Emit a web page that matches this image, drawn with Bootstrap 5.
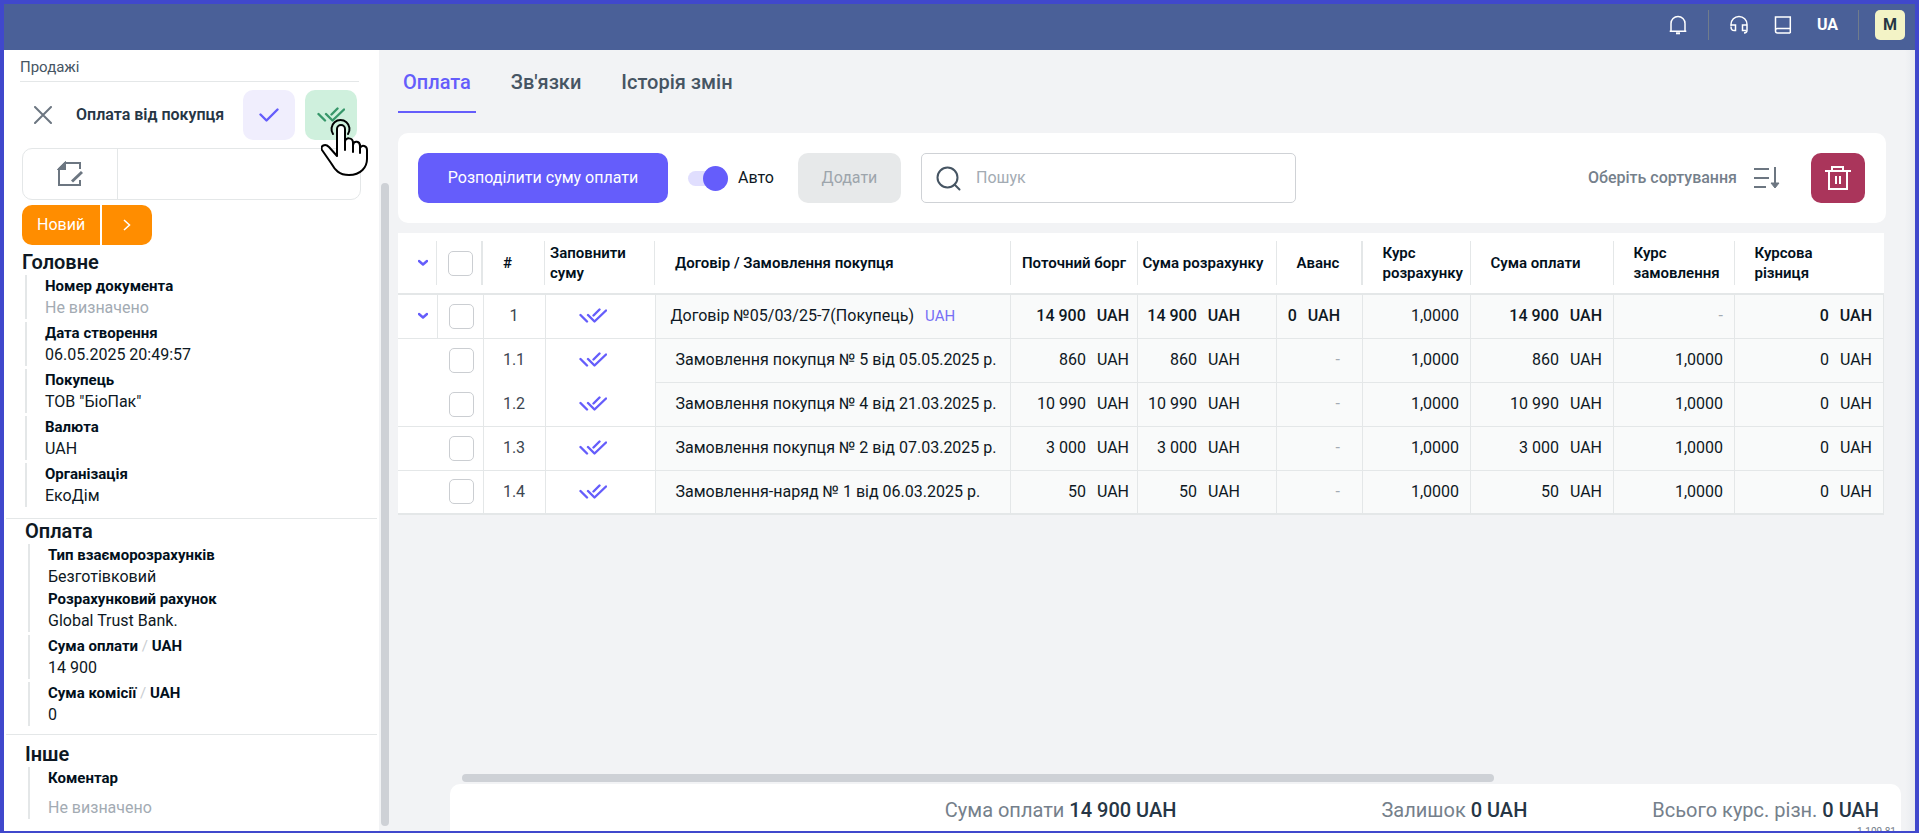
<!DOCTYPE html>
<html lang="uk">
<head>
<meta charset="utf-8">
<meta name="viewport" content="width=device-width, initial-scale=1">
<title>Оплата від покупця</title>
<link href="https://cdn.jsdelivr.net/npm/bootstrap@5.3.0/dist/css/bootstrap.min.css" rel="stylesheet">
<style>
  :root { --accent: #655dfb; --ink: #0e1823; --slate: #465563; --muted: #75808b; --line: #e4e7e8; }
  body { font-family: Roboto, "Liberation Sans", sans-serif; font-size: 16px; line-height: 22px; color: var(--ink); background: #f2f3f5; }
  .app { min-height: 100vh; border: 4px solid #4048cc; border-bottom-width: 2px; }
  .topbar { background: #4a6098; padding: 6px 10px 10px; color: #fff; }
  .topbar a { color: #fff; }
  .topbar .vr { color: #707c8c; opacity: 1; margin: 0 20px; }
  .topbar .vr:last-of-type { margin-right: 16px; }
  .avatar { width: 30px; height: 30px; border-radius: 5px; background: #f3f3c6; color: #263645; }
  svg { display: block; fill: none; }

  /* left panel */
  .side { width: 375px; background: #fff; }
  .crumb { font-size: 15px; color: var(--slate); border-bottom: 1px solid var(--line); margin: 0 20px 0 16px; padding: 11px 0 8px; line-height: 12px; }
  .docname { font-weight: 600; color: #263645; }
  .sq { width: 52px; height: 50px; border-radius: 10px; border: 0; padding: 0; display: grid; place-items: center; }
  .sq-ok { background: #f0eefd; }
  .sq-all { background: #cff0dd; color: #37976a; }
  .hand { position: absolute; left: 16px; top: 29px; pointer-events: none; }
  .strip { border: 1px solid var(--line); border-radius: 10px; height: 52px; margin: 8px 18px 5px; }
  .strip .cellbtn { width: 95px; border: 0; border-right: 1px solid var(--line); background: none; display: grid; place-items: center; }
  .state { margin-left: 18px; gap: 2px; }
  .state button { background: #ff8d00; color: #fff; border: 0; height: 40px; padding: 0 15px; }
  .state button:first-child { border-radius: 10px 0 0 10px; }
  .state button:last-child { border-radius: 0 10px 10px 0; width: 50px; }
  .sect { border-bottom: 1px solid var(--line); padding: 0 16px 5px 19px; margin: 0 2px; }
  .sect-first { padding: 5px 16px 8px; }
  .sect-last { padding-top: 7px; border: 0; }
  .sect h2 { font-size: 20px; line-height: 25px; font-weight: 600; margin: 0; }
  .sect dl { border-left: 2px solid var(--line); margin: 0 0 3px 3px; padding-left: 18px; }
  .sect dt { font-size: 15px; font-weight: 700; line-height: 22px; color: #02101c; }
  .sect dd { margin: 0; }
  .sect .sep { color: #c9cdd1; font-weight: 400; }
  .none { color: #a3abb3; }
  .vtrack { width: 10px; padding: 133px 0 5px 2px; }
  .thumb { background: #ced1d6; border-radius: 4px; }

  /* main area */
  .work { min-width: 0; padding-left: 9px; background: linear-gradient(to left, #e8ebef, #f2f3f5 10px); }
  .tabs { gap: 30px; }
  .tabs a { font-size: 20px; font-weight: 500; color: var(--slate); padding: 21px 5px 18px; border-bottom: 2px solid transparent; text-decoration: none; }
  .tabs a.active { color: var(--accent); border-color: var(--accent); }
  .bar { background: #fff; border-radius: 10px; padding: 20px 21px 20px 20px; margin: 20px 29px 10px 0; }
  .bar .btn { height: 50px; border-radius: 10px; border: 0; font-size: 16px; padding: 0; }
  .btn-main, .btn-main:hover { background: var(--accent); color: #fff; width: 250px; }
  .btn-add { width: 103px; }
  .btn-add:disabled { background: #e7e9ea; color: #9da5ac; opacity: 1; }
  .btn-del, .btn-del:hover { background: #aa355b; width: 54px; display: grid; place-items: center; }
  .auto { gap: 10px; margin: 0 24px 0 20px; }
  .toggle { appearance: none; position: relative; width: 40px; height: 25px; margin: 0; }
  .toggle::before { content: ""; position: absolute; inset: 5px 0; border-radius: 8px; background: #e0defe; }
  .toggle::after { content: ""; position: absolute; inset: 0 0 0 15px; border-radius: 50%; background: var(--accent); }
  .find { width: 375px; height: 50px; border: 1px solid #cfd2d6; border-radius: 5px; padding: 0 14px; gap: 13px; margin-left: 20px; }
  .find input { border: 0; outline: 0; min-width: 0; }
  .find input::placeholder { color: #a3abb3; opacity: 1; }
  .sorter { border: 0; background: none; color: var(--muted); font-weight: 500; gap: 17px; padding: 0; margin-right: 31px; }

  .gridwrap { margin-right: 31px; }
  .pay { table-layout: fixed; width: 100%; border-bottom: 2px solid var(--line); background: #fff; }
  .pay th { height: 61px; font-size: 15px; line-height: 20px; font-weight: 600; color: #02101c; padding: 0 0 0 20px; border-bottom: 2px solid var(--line);
    background: linear-gradient(var(--line), var(--line)) right center / 1px 44px no-repeat; white-space: nowrap; }
  .pay th.wide { background-size: 2px 44px; }
  .pay th:last-child { background: none; }
  .pay th.snug { padding-left: 5px; }
  .pay td { height: 44px; padding: 0; border-right: 1px solid var(--line); border-bottom: 1px solid var(--line); text-align: right; white-space: nowrap; }
  .pay td:nth-child(n+5) { background: #f9fafa; padding-right: 11px; }
  .pay td:nth-child(5) { text-align: left; padding-left: 20px; }
  .pay tr.total td:nth-child(5) { padding-left: 15px; }
  .pay td:nth-child(6) { padding-right: 8px; }
  .pay td:nth-child(7) { padding-right: 36px; }
  .pay td:nth-child(8) { padding-right: 22px; }
  .pay td:nth-child(3) { text-align: center; color: #3c4650; }
  .pay tr:not(.total) td:first-child { border-right-color: transparent; }
  .pay tr.joined td:nth-child(-n+4) { border-bottom-color: transparent; }
  .pay td b { font-weight: 500; }
  .pay td i { font-style: normal; margin-left: 11px; }
  .pay td .cur { font-size: 15px; color: #766ff5; margin-left: 11px; }
  .pay button { border: 0; background: none; padding: 0; display: block; color: var(--accent); }
  .pay .open { margin-left: 20px; }
  .pay .fill { margin-left: 33px; }
  .tick { appearance: none; display: block; width: 25px; height: 25px; border: 1px solid #cbced2; border-radius: 5px; background: #fff; margin: 0 0 0 11px; }
  .pay td.dash { color: #a3abb3; }

  .hthumb { height: 8px; width: 68%; margin: 0 0 2px 64px; }
  .totals { position: relative; height: 47px; overflow: hidden; background: #fff; border-radius: 10px 10px 0 0; margin: 0 14px 0 52px; padding: 14px 22px 0; font-size: 20px; line-height: 24px; color: var(--muted); }
  .totals strong { font-weight: 500; color: #263645; }
  .totals .t-sum { margin-right: 205px; }
  .totals .t-rest { margin-right: 125px; }
  .ver { position: absolute; right: 5px; top: 41px; font-size: 10px; line-height: 14px; }
</style>
</head>
<body>
<svg width="0" height="0" class="position-absolute" aria-hidden="true">
  <symbol id="dbl" viewBox="0 0 28 16"><g stroke="currentColor" stroke-width="2.400" stroke-linecap="round" stroke-linejoin="round" fill="none"><path d="M1.500 7l6.500 6.500M9 7l6.500 6.500L27 2.500M14.500 7.500L20.500 1.500"/></g></symbol>
  <symbol id="chev" viewBox="0 0 10 8"><path d="M1 2l4 3.500L9 2" stroke="currentColor" stroke-width="2.400" fill="none" stroke-linecap="round" stroke-linejoin="round"/></symbol>
</svg>

<div class="app d-flex flex-column">
  <header class="topbar d-flex justify-content-end align-items-center">
    <a href="#" aria-label="Сповіщення"><svg width="20" height="20" viewBox="0 0 20 20" stroke="#fff" stroke-width="1.500"><path d="M3 16.200V8.500a7 7 0 0 1 14 0v7.700M1.700 16.200h16.600"/><path d="M8 18.300h4" stroke-width="2"/></svg></a>
    <span class="vr align-self-stretch"></span>
    <a href="#" class="me-4" aria-label="Підтримка"><svg width="20" height="20" viewBox="0 0 20 20" stroke="#fff" stroke-width="1.500"><path d="M2 11V9.500a8 8 0 0 1 16 0V15c0 2-1 3-3 3M2 11.500c0 3 1 4.500 4.500 4V10H2.500M18 10h-4.500v5.500H17"/></svg></a>
    <a href="#" class="me-4" aria-label="Довідка"><svg width="20" height="20" viewBox="0 0 20 20" stroke="#fff" stroke-width="1.500"><path d="M17.300 18H4.500a2 2 0 0 1-2-2V2h14.800v16M2.500 15.500c0-1.500 1-2 2-2h12.800"/></svg></a>
    <a href="#" class="fw-bold text-decoration-none">UA</a>
    <span class="vr align-self-stretch"></span>
    <button class="avatar border-0 p-0 fw-bold">M</button>
  </header>

  <div class="d-flex flex-grow-1">
    <aside class="side flex-shrink-0">
      <div class="crumb">Продажі</div>
      <div class="d-flex align-items-center" style="padding:8px 22px 0 30px">
        <button class="border-0 bg-transparent p-0" aria-label="Закрити"><svg width="18" height="18" viewBox="0 0 18 18" stroke="#6c7681" stroke-width="2" stroke-linecap="round"><path d="M1 1l16 16M17 1L1 17"/></svg></button>
        <span class="docname ms-4 me-auto">Оплата від покупця</span>
        <button class="sq sq-ok" aria-label="Провести"><svg width="20" height="14" viewBox="0 0 20 14" stroke="#655dfb" stroke-width="2.400" stroke-linecap="round" stroke-linejoin="round"><path d="M1.500 6.500l6 6L18.500 1.500"/></svg></button>
        <div class="position-relative" style="margin-left:10px">
          <button class="sq sq-all" aria-label="Провести і закрити"><svg width="28" height="16"><use href="#dbl"/></svg></button>
          <svg class="hand" width="48" height="58" viewBox="0 0 48 58" stroke="#000" stroke-width="2" stroke-linejoin="round" stroke-linecap="round"><path d="M12 15A9 9 0 1 1 27 15"/><path fill="#fff" d="M16 37V10a4 4 0 0 1 8 0v13c0-5 8-5 8 1v2c1-5 7-4 7 1v2c2-4 7-2 7 2v9c0 8-6 16-18 16-10 0-14-5-18-12L1 31c-2-4 3-7 7-3z"/><path d="M24 22v9M32 24v9M39 26v8"/></svg>
        </div>
      </div>
      <div class="strip d-flex"><button class="cellbtn" aria-label="Редагувати"><svg width="26" height="26" viewBox="0 0 26 26" stroke="#6c7681" stroke-width="2"><path d="M23 8V2H8L2 8v16h21v-5"/><path d="M2 8l6-6v6z" fill="#6c7681"/><path d="M15 20.500L25 11" stroke-width="3"/></svg></button></div>
      <div class="state d-flex"><button>Новий</button><button class="d-flex align-items-center justify-content-center" aria-label="Далі"><svg width="8" height="12" viewBox="0 0 8 12" stroke="#fff" stroke-width="1.500"><path d="M1 1l5.500 5L1 11"/></svg></button></div>

      <section class="sect sect-first">
        <h2>Головне</h2>
        <dl><dt>Номер документа</dt><dd class="none">Не визначено</dd></dl>
        <dl><dt>Дата створення</dt><dd>06.05.2025 20:49:57</dd></dl>
        <dl><dt>Покупець</dt><dd>ТОВ "БіоПак"</dd></dl>
        <dl><dt>Валюта</dt><dd>UAH</dd></dl>
        <dl><dt>Організація</dt><dd>ЕкоДім</dd></dl>
      </section>
      <section class="sect">
        <h2>Оплата</h2>
        <dl><dt>Тип взаєморозрахунків</dt><dd>Безготівковий</dd><dt>Розрахунковий рахунок</dt><dd>Global Trust Bank.</dd></dl>
        <dl><dt>Сума оплати <span class="sep">/</span> UAH</dt><dd>14 900</dd></dl>
        <dl><dt>Сума комісії <span class="sep">/</span> UAH</dt><dd>0</dd></dl>
      </section>
      <section class="sect sect-last">
        <h2>Інше</h2>
        <dl><dt>Коментар</dt><dd class="none pt-2">Не визначено</dd></dl>
      </section>
    </aside>
    <div class="vtrack d-flex flex-shrink-0"><div class="thumb flex-grow-1"></div></div>

    <main class="work flex-grow-1 d-flex flex-column">
      <nav class="tabs d-flex">
        <a href="#" class="active" aria-current="page">Оплата</a><a href="#">Зв'язки</a><a href="#">Історія змін</a>
      </nav>
      <div class="bar d-flex align-items-center">
        <button class="btn btn-main">Розподілити суму оплати</button>
        <label class="auto d-flex align-items-center"><input class="toggle" type="checkbox" role="switch" checked>Авто</label>
        <button class="btn btn-add" disabled>Додати</button>
        <label class="find d-flex align-items-center"><svg width="25" height="25" viewBox="0 0 25 25" stroke="#465563" stroke-width="2" stroke-linecap="round"><circle cx="11.500" cy="11.500" r="10"/><path d="M18.500 18.500l5 5"/></svg><input type="search" placeholder="Пошук" aria-label="Пошук"></label>
        <button class="sorter d-flex align-items-center ms-auto">Оберіть сортування<svg width="26" height="22" viewBox="0 0 26 22" stroke="#6c7681" stroke-width="2"><path d="M0 2h15M0 11h15M0 20h12M21 0v17"/><path d="M17 16h8l-4 5z" fill="#6c7681" stroke-width="1"/></svg></button>
        <button class="btn btn-del" aria-label="Видалити"><svg width="26" height="26" viewBox="0 0 26 26" stroke="#fff" stroke-width="2"><path d="M0 6h26M7 6V2h11v4M4 6v18h18V6M11 11v8M15 11v8"/></svg></button>
      </div>

      <div class="gridwrap">
        <table class="pay">
          <colgroup><col style="width:39px"><col style="width:46px"><col style="width:62px"><col style="width:110px"><col><col style="width:127px"><col style="width:139px"><col style="width:86px"><col style="width:108px"><col style="width:143px"><col style="width:121px"><col style="width:149px"></colgroup>
          <thead><tr>
            <th class="p-0"><button class="open" aria-label="Розгорнути все"><svg width="10" height="8"><use href="#chev"/></svg></button></th>
            <th class="p-0 wide"><input type="checkbox" class="tick" aria-label="Вибрати все"></th>
            <th>#</th><th class="snug">Заповнити<br>суму</th><th>Договір / Замовлення покупця</th>
            <th class="p-0 text-center">Поточний борг</th><th class="snug">Сума розрахунку</th><th class="wide">Аванс</th>
            <th>Курс<br>розрахунку</th><th>Сума оплати</th><th>Курс<br>замовлення</th><th>Курсова<br>різниця</th>
          </tr></thead>
          <tbody>
            <tr class="total"><td><button class="open" aria-label="Згорнути"><svg width="10" height="8"><use href="#chev"/></svg></button></td><td><input type="checkbox" class="tick" aria-label="Рядок 1"></td><td>1</td><td><button class="fill" aria-label="Заповнити"><svg width="28" height="16"><use href="#dbl"/></svg></button></td><td>Договір №05/03/25-7(Покупець)<span class="cur">UAH</span></td><td><b>14 900<i>UAH</i></b></td><td><b>14 900<i>UAH</i></b></td><td><b>0<i>UAH</i></b></td><td>1,0000</td><td><b>14 900<i>UAH</i></b></td><td class="dash">-</td><td><b>0<i>UAH</i></b></td></tr>
            <tr class="joined"><td></td><td><input type="checkbox" class="tick" aria-label="Рядок 1.1"></td><td>1.1</td><td><button class="fill" aria-label="Заповнити"><svg width="28" height="16"><use href="#dbl"/></svg></button></td><td>Замовлення покупця № 5 від 05.05.2025 р.</td><td>860<i>UAH</i></td><td>860<i>UAH</i></td><td class="dash">-</td><td>1,0000</td><td>860<i>UAH</i></td><td>1,0000</td><td>0<i>UAH</i></td></tr>
            <tr><td></td><td><input type="checkbox" class="tick" aria-label="Рядок 1.2"></td><td>1.2</td><td><button class="fill" aria-label="Заповнити"><svg width="28" height="16"><use href="#dbl"/></svg></button></td><td>Замовлення покупця № 4 від 21.03.2025 р.</td><td>10 990<i>UAH</i></td><td>10 990<i>UAH</i></td><td class="dash">-</td><td>1,0000</td><td>10 990<i>UAH</i></td><td>1,0000</td><td>0<i>UAH</i></td></tr>
            <tr><td></td><td><input type="checkbox" class="tick" aria-label="Рядок 1.3"></td><td>1.3</td><td><button class="fill" aria-label="Заповнити"><svg width="28" height="16"><use href="#dbl"/></svg></button></td><td>Замовлення покупця № 2 від 07.03.2025 р.</td><td>3 000<i>UAH</i></td><td>3 000<i>UAH</i></td><td class="dash">-</td><td>1,0000</td><td>3 000<i>UAH</i></td><td>1,0000</td><td>0<i>UAH</i></td></tr>
            <tr><td></td><td><input type="checkbox" class="tick" aria-label="Рядок 1.4"></td><td>1.4</td><td><button class="fill" aria-label="Заповнити"><svg width="28" height="16"><use href="#dbl"/></svg></button></td><td>Замовлення-наряд № 1 від 06.03.2025 р.</td><td>50<i>UAH</i></td><td>50<i>UAH</i></td><td class="dash">-</td><td>1,0000</td><td>50<i>UAH</i></td><td>1,0000</td><td>0<i>UAH</i></td></tr>
          </tbody>
        </table>
      </div>

      <div class="mt-auto">
        <div class="thumb hthumb"></div>
        <div class="totals d-flex justify-content-end">
          <span class="t-sum">Сума оплати <strong>14 900 UAH</strong></span>
          <span class="t-rest">Залишок <strong>0 UAH</strong></span>
          <span>Всього курс. різн. <strong>0 UAH</strong></span>
          <span class="ver">1.109.81</span>
        </div>
      </div>
    </main>
  </div>
</div>
<script src="https://cdn.jsdelivr.net/npm/bootstrap@5.3.0/dist/js/bootstrap.bundle.min.js"></script>
</body>
</html>
